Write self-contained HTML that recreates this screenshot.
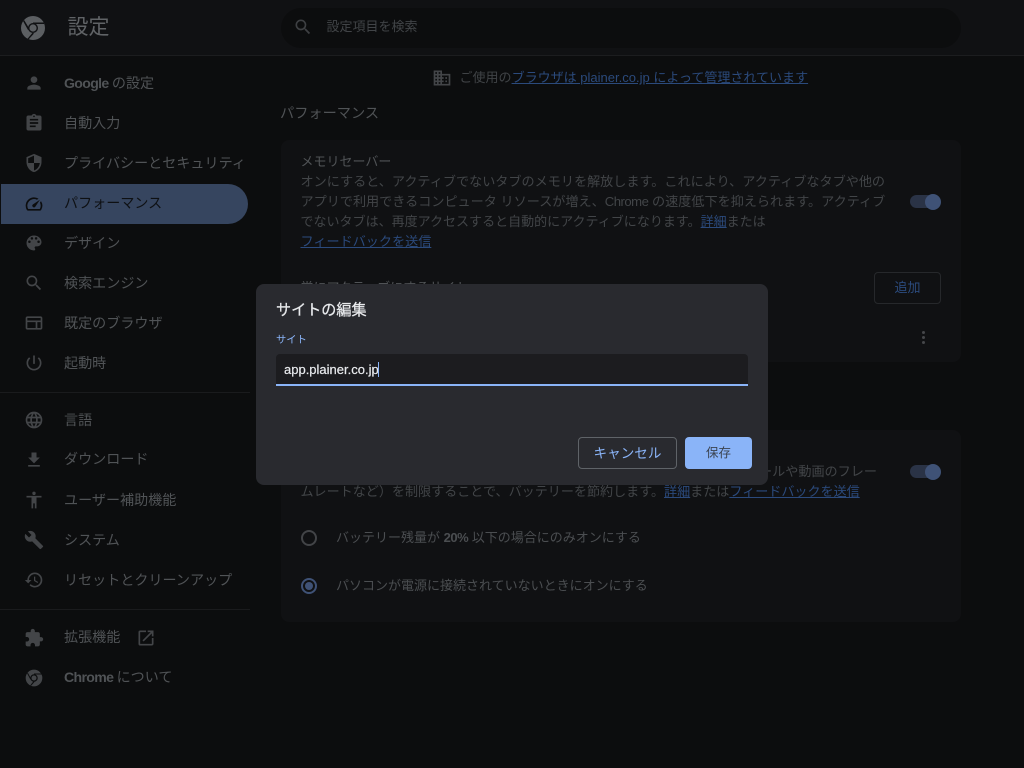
<!DOCTYPE html>
<html lang="ja">
<head>
<meta charset="utf-8">
<style>
html,body{margin:0;padding:0;width:1024px;height:768px;overflow:hidden;background:#0c0d0e;}
body{position:relative;font-family:"Liberation Sans","Noto Sans CJK JP",sans-serif;color:#505356;}
.t{position:absolute;white-space:nowrap;line-height:20px;font-size:14.08px;}
.c{font-size:13.12px;color:#424548;}
.b{position:absolute;}
a{color:#2b4a7c;text-decoration:underline;}
svg.i{position:absolute;width:20px;height:20px;fill:#434548;}
.g{font-weight:bold;letter-spacing:-.65px;}
.g span{letter-spacing:0;}
</style>
</head>
<body>
<div class="b" style="left:0;top:0;width:1024px;height:55px;background:#101113;border-bottom:1px solid #1c1d1f;"></div>
<svg class="i" style="left:21px;top:16px;width:24px;height:24px;fill:#5c5f62" viewBox="0 0 24 24"><path fill-rule="evenodd" d="M12 0a12 12 0 1 1 0 24a12 12 0 0 1 0-24zM12 7a5 5 0 1 0 0 10a5 5 0 0 0 0-10z"/><circle cx="12" cy="12" r="3.6"/><path d="M12 6.5H23V8H12zM7 14L2 5l1.3-.8L8.5 13zM13 17.5l-5.5 6-1-.8 5-6z" fill="#101113"/></svg>
<div class="t" style="left:67.5px;top:14px;font-size:21px;line-height:28px;color:#606366;">設定</div>
<div class="b" style="left:281px;top:8px;width:680px;height:40px;border-radius:20px;background:#0c0d0e;"></div>
<svg class="i" style="left:293px;top:17px;" viewBox="0 0 24 24"><path fill="#3e4043" d="M15.5 14h-.79l-.28-.27A6.47 6.47 0 0 0 16 9.5 6.5 6.5 0 1 0 9.5 16c1.61 0 3.09-.59 4.23-1.57l.27.28v.79l5 4.99L20.49 19l-4.99-5zm-6 0C7.01 14 5 11.99 5 9.5S7.01 5 9.5 5 14 7.01 14 9.5 11.99 14 9.5 14z"/></svg>
<div class="t" style="left:326.5px;top:17px;font-size:13px;color:#414447;">設定項目を検索</div>

<!-- sidebar -->
<div class="b" style="left:1px;top:184px;width:247px;height:40px;background:#36455f;border-radius:0 20px 20px 0;"></div>
<svg class="i" style="left:24px;top:73px" viewBox="0 0 24 24"><path d="M12 12c2.21 0 4-1.79 4-4s-1.79-4-4-4-4 1.79-4 4 1.79 4 4 4zm0 2c-2.67 0-8 1.34-8 4v2h16v-2c0-2.66-5.33-4-8-4z"/></svg>
<div class="t g" style="left:64px;top:73px;">Google <span style="font-weight:normal">の設定</span></div>
<svg class="i" style="left:24px;top:113px;" viewBox="0 0 24 24"><path d="M19 3h-4.18C14.4 1.84 13.3 1 12 1s-2.4.84-2.82 2H5c-1.1 0-2 .9-2 2v14c0 1.1.9 2 2 2h14c1.1 0 2-.9 2-2V5c0-1.1-.9-2-2-2zm-7 0c.55 0 1 .45 1 1s-.45 1-1 1-1-.45-1-1 .45-1 1-1zm2 14H7v-2h7v2zm3-4H7v-2h10v2zm0-4H7V7h10v2z"/></svg>
<div class="t" style="left:64px;top:113px;">自動入力</div>
<svg class="i" style="left:24px;top:153px;" viewBox="0 0 24 24"><path d="M12 1L3 5v6c0 5.55 3.84 10.74 9 12 5.16-1.26 9-6.45 9-12V5l-9-4zm0 10.99h7c-.53 4.12-3.28 7.79-7 8.94V12H5V6.3l7-3.11v8.8z"/></svg>
<div class="t" style="left:64px;top:153px;">プライバシーとセキュリティ</div>
<svg class="i" style="left:24px;top:194px;fill:#0c0d0e" viewBox="0 0 24 24"><path d="M20.38 8.57l-1.23 1.85a8 8 0 0 1-.22 7.58H5.07A8 8 0 0 1 15.58 6.85l1.85-1.23A10 10 0 0 0 3.35 19a2 2 0 0 0 1.72 1h13.85a2 2 0 0 0 1.74-1 10 10 0 0 0-.27-10.44z"/><path d="M10.59 15.41a2 2 0 0 0 2.83 0l5.66-8.49-8.49 5.66a2 2 0 0 0 0 2.83z"/></svg>
<div class="t" style="left:64px;top:193px;color:#0e1013;">パフォーマンス</div>
<svg class="i" style="left:24px;top:233px;" viewBox="0 0 24 24"><path d="M12 3a9 9 0 0 0 0 18c.83 0 1.5-.67 1.5-1.5 0-.39-.15-.74-.39-1.01-.23-.26-.38-.61-.38-.99 0-.83.67-1.5 1.5-1.5H16c2.76 0 5-2.24 5-5 0-4.42-4.03-8-9-8zm-5.5 9a1.5 1.5 0 1 1 0-3 1.5 1.5 0 0 1 0 3zm3-4a1.5 1.5 0 1 1 0-3 1.5 1.5 0 0 1 0 3zm5 0a1.5 1.5 0 1 1 0-3 1.5 1.5 0 0 1 0 3zm3 4a1.5 1.5 0 1 1 0-3 1.5 1.5 0 0 1 0 3z"/></svg>
<div class="t" style="left:64px;top:233px;">デザイン</div>
<svg class="i" style="left:24px;top:273px;" viewBox="0 0 24 24"><path d="M15.5 14h-.79l-.28-.27A6.47 6.47 0 0 0 16 9.5 6.5 6.5 0 1 0 9.5 16c1.61 0 3.09-.59 4.23-1.57l.27.28v.79l5 4.99L20.49 19l-4.99-5zm-6 0C7.01 14 5 11.99 5 9.5S7.01 5 9.5 5 14 7.01 14 9.5 11.99 14 9.5 14z"/></svg>
<div class="t" style="left:64px;top:273px;">検索エンジン</div>
<svg class="i" style="left:24px;top:313px;" viewBox="0 0 24 24"><path d="M20 4H4c-1.1 0-2 .9-2 2v12c0 1.1.9 2 2 2h16c1.1 0 2-.9 2-2V6c0-1.1-.9-2-2-2zM4 18v-7h10v7H4zm16 0h-4v-7h4v7zm0-9H4V6h16v3z"/></svg>
<div class="t" style="left:64px;top:313px;">既定のブラウザ</div>
<svg class="i" style="left:24px;top:353px;" viewBox="0 0 24 24"><path d="M13 3h-2v10h2V3zm4.83 2.17l-1.42 1.42A6.92 6.92 0 0 1 19 12c0 3.87-3.13 7-7 7s-7-3.13-7-7c0-2.19 1.01-4.14 2.58-5.42L6.17 5.17A8.96 8.96 0 0 0 3 12c0 4.97 4.03 9 9 9s9-4.03 9-9c0-2.74-1.23-5.19-3.17-6.83z"/></svg>
<div class="t" style="left:64px;top:353px;">起動時</div>
<div class="b" style="left:0;top:392px;width:250px;height:1px;background:#1a1b1d;"></div>
<svg class="i" style="left:24px;top:410px;" viewBox="0 0 24 24"><path d="M12 2a10 10 0 1 0 0 20 10 10 0 0 0 0-20zm6.93 6h-2.95a15.65 15.65 0 0 0-1.38-3.56A8.03 8.03 0 0 1 18.92 8zM12 4.04c.83 1.2 1.48 2.53 1.91 3.96h-3.82c.43-1.43 1.08-2.76 1.91-3.96zM4.26 14a8.2 8.2 0 0 1 0-4h3.38a16.5 16.5 0 0 0 0 4H4.26zm.82 2h2.95c.32 1.25.78 2.45 1.38 3.56A7.99 7.99 0 0 1 5.08 16zm2.95-8H5.08a7.99 7.99 0 0 1 4.33-3.56A15.65 15.65 0 0 0 8.03 8zM12 19.96A14.1 14.1 0 0 1 10.09 16h3.82A14.1 14.1 0 0 1 12 19.96zM14.34 14H9.66a14.7 14.7 0 0 1 0-4h4.68a14.7 14.7 0 0 1 0 4zm.25 5.56c.6-1.11 1.06-2.31 1.38-3.56h2.95a8.03 8.03 0 0 1-4.33 3.56zM16.36 14a16.5 16.5 0 0 0 0-4h3.38a8.2 8.2 0 0 1 0 4h-3.38z"/></svg>
<div class="t" style="left:64px;top:410px;">言語</div>
<svg class="i" style="left:24px;top:450px;" viewBox="0 0 24 24"><path d="M19 9h-4V3H9v6H5l7 7 7-7zM5 18v2h14v-2H5z"/></svg>
<div class="t" style="left:64px;top:449px;">ダウンロード</div>
<svg class="i" style="left:24px;top:490px;" viewBox="0 0 24 24"><path d="M12 2a2 2 0 1 1 0 4 2 2 0 0 1 0-4zm9 7h-6v13h-2v-6h-2v6H9V9H3V7h18v2z"/></svg>
<div class="t" style="left:64px;top:490px;">ユーザー補助機能</div>
<svg class="i" style="left:24px;top:530px;" viewBox="0 0 24 24"><path d="M22.7 19l-9.1-9.1c.9-2.3.4-5-1.5-6.9-2-2-5-2.4-7.4-1.3L9 6 6 9 1.6 4.7C.4 7.1.9 10.1 2.9 12.1c1.9 1.9 4.6 2.4 6.9 1.5l9.1 9.1c.4.4 1 .4 1.4 0l2.3-2.3c.5-.4.5-1.1.1-1.4z"/></svg>
<div class="t" style="left:64px;top:530px;">システム</div>
<svg class="i" style="left:24px;top:570px;" viewBox="0 0 24 24"><path d="M13 3a9 9 0 0 0-9 9H1l3.89 3.89.07.14L9 12H6c0-3.87 3.13-7 7-7s7 3.13 7 7-3.13 7-7 7c-1.93 0-3.68-.79-4.94-2.06l-1.42 1.42A8.9 8.9 0 0 0 13 21a9 9 0 0 0 0-18zm-1 5v5l4.28 2.54.72-1.21-3.5-2.08V8H12z"/></svg>
<div class="t" style="left:64px;top:570px;">リセットとクリーンアップ</div>
<div class="b" style="left:0;top:609px;width:250px;height:1px;background:#1a1b1d;"></div>
<svg class="i" style="left:24px;top:628px;" viewBox="0 0 24 24"><path d="M20.5 11H19V7c0-1.1-.9-2-2-2h-4V3.5a2.5 2.5 0 0 0-5 0V5H4c-1.1 0-1.99.9-1.99 2v3.8H3.5c1.49 0 2.7 1.21 2.7 2.7s-1.21 2.7-2.7 2.7H2V20c0 1.1.9 2 2 2h3.8v-1.5c0-1.49 1.21-2.7 2.7-2.7s2.7 1.21 2.7 2.7V22H17c1.1 0 2-.9 2-2v-4h1.5a2.5 2.5 0 0 0 0-5z"/></svg>
<div class="t" style="left:64px;top:627px;">拡張機能</div>
<svg class="i" style="left:136px;top:628px;" viewBox="0 0 24 24"><path d="M19 19H5V5h7V3H5a2 2 0 0 0-2 2v14a2 2 0 0 0 2 2h14c1.1 0 2-.9 2-2v-7h-2v7zM14 3v2h3.59l-9.83 9.83 1.41 1.41L19 6.41V10h2V3h-7z"/></svg>
<svg class="i" style="left:24px;top:668px;" viewBox="0 0 24 24"><path fill-rule="evenodd" d="M12 2a10 10 0 1 1 0 20 10 10 0 0 1 0-20zm0 5.5a4.5 4.5 0 1 0 0 9 4.5 4.5 0 0 0 0-9z"/><circle cx="12" cy="12" r="3"/><path d="M12 6.6H21.5V7.8H12zM7.5 13.5L3.7 6.5l1-.6L8.6 13zM12.8 16.5l-4.4 5-.9-.7 4-5z" fill="#0c0d0e"/></svg>
<div class="t g" style="left:64px;top:667px;">Chrome <span style="font-weight:normal">について</span></div>

<!-- main -->
<svg class="i" style="left:432px;top:68px;" viewBox="0 0 24 24"><path d="M12 7V3H2v18h20V7H12zM6 19H4v-2h2v2zm0-4H4v-2h2v2zm0-4H4V9h2v2zm0-4H4V5h2v2zm4 12H8v-2h2v2zm0-4H8v-2h2v2zm0-4H8V9h2v2zm0-4H8V5h2v2zm10 12h-8v-2h2v-2h-2v-2h2v-2h-2V9h8v10zm-2-8h-2v2h2v-2zm0 4h-2v2h2v-2z"/></svg>
<div class="t" style="left:459.5px;top:68px;font-size:13.02px;color:#404346;">ご使用の<a href="#">ブラウザは plainer.co.jp によって管理されています</a></div>
<div class="t" style="left:280px;top:104px;color:#505356;font-size:14.2px;">パフォーマンス</div>

<div class="b" style="left:281px;top:140px;width:680px;height:222px;background:#101113;border-radius:8px;"></div>
<div class="t" style="left:300.5px;top:152px;font-size:13px;color:#505356;">メモリセーバー</div>
<div class="t c" style="left:300.5px;top:172px;">オンにすると、アクティブでないタブのメモリを解放します。これにより、アクティブなタブや他の</div>
<div class="t c" style="left:300.5px;top:192px;">アプリで利用できるコンピュータ リソースが増え、<span style="letter-spacing:-.5px">Chrome</span> の速度低下を抑えられます。アクティブ</div>
<div class="t c" style="left:300.5px;top:212px;font-size:13.02px;">でないタブは、再度アクセスすると自動的にアクティブになります。<a href="#">詳細</a>または</div>
<div class="t c" style="left:300.5px;top:232px;"><a href="#">フィードバックを送信</a></div>
<div class="t" style="left:300.5px;top:278px;font-size:13px;color:#505356;">常にアクティブにするサイト</div>
<div class="b" style="left:910px;top:195px;width:24px;height:13px;border-radius:7px;background:#2a3346;"></div>
<div class="b" style="left:925px;top:194px;width:16px;height:16px;border-radius:50%;background:#3f5276;"></div>
<div class="b" style="left:874px;top:272px;width:65px;height:30px;border:1px solid #26282b;border-radius:4px;text-align:center;font-size:13px;line-height:30px;color:#2b4a7c;">追加</div>
<div class="b" style="left:921.5px;top:331px;width:3px;height:3px;border-radius:50%;background:#45474a;box-shadow:0 5px 0 #45474a,0 10px 0 #45474a;"></div>

<div class="b" style="left:281px;top:430px;width:680px;height:192px;background:#101113;border-radius:8px;"></div>
<div class="t c" style="left:759px;top:462px;">ールや動画のフレー</div>
<div class="t c" style="left:300.5px;top:482px;font-size:13.07px;">ムレートなど）を制限することで、バッテリーを節約します。<a href="#">詳細</a>または<a href="#">フィードバックを送信</a></div>
<div class="b" style="left:910px;top:465px;width:24px;height:13px;border-radius:7px;background:#2a3346;"></div>
<div class="b" style="left:925px;top:464px;width:16px;height:16px;border-radius:50%;background:#3f5276;"></div>
<div class="b" style="left:301px;top:530px;width:12px;height:12px;border:2px solid #424447;border-radius:50%;"></div>
<div class="t" style="left:336px;top:528px;font-size:13px;color:#4b4e51;">バッテリー残量が <b style="letter-spacing:-.5px">20%</b> 以下の場合にのみオンにする</div>
<div class="b" style="left:301px;top:578px;width:12px;height:12px;border:2px solid #3f5276;border-radius:50%;"></div>
<div class="b" style="left:305px;top:582px;width:8px;height:8px;background:#3f5276;border-radius:50%;"></div>
<div class="t" style="left:336px;top:576px;font-size:13px;color:#4b4e51;">パソコンが電源に接続されていないときにオンにする</div>

<!-- dialog -->
<div class="b" style="left:256px;top:284px;width:512px;height:201px;background:#292a2f;border-radius:8px;"></div>
<div class="t" style="left:276px;top:301px;font-size:15.1px;color:#e8eaed;-webkit-text-stroke:.25px #e8eaed;">サイトの編集</div>
<div class="t" style="left:276px;top:331px;font-size:10.3px;color:#8ab4f8;">サイト</div>
<div class="b" style="left:276px;top:354px;width:472px;height:30px;background:#1c1c1f;border-radius:4px 4px 0 0;border-bottom:2px solid #8ab4f8;"></div>
<div class="t" style="left:284px;top:360px;font-size:13px;color:#e8eaed;-webkit-text-stroke:.2px #e8eaed;">app.plainer.co.jp</div>
<div class="b" style="left:378px;top:362px;width:1px;height:15px;background:#8ab4f8;"></div>
<div class="b" style="left:578px;top:437px;width:97px;height:30px;border:1px solid #5f6368;border-radius:4px;text-align:center;font-size:13.6px;line-height:32px;color:#8ab4f8;">キャンセル</div>
<div class="b" style="left:685px;top:437px;width:67px;height:32px;background:#8ab4f8;border-radius:4px;text-align:center;font-size:12.5px;line-height:32px;color:#3b4350;">保存</div>
</body>
</html>
